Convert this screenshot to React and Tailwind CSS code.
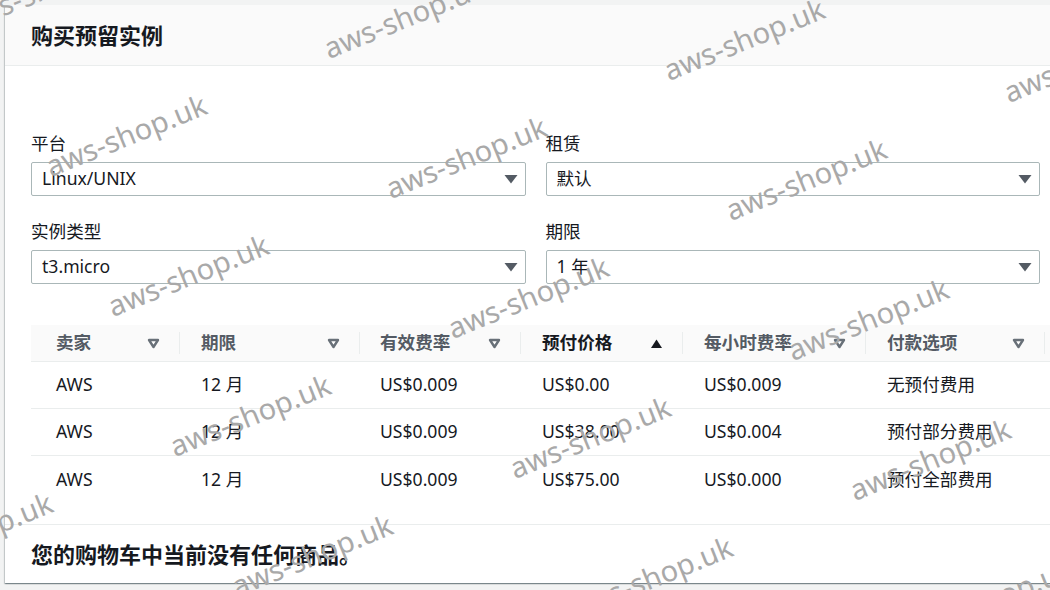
import React from "react";

const FONT = { fontFamily: '"Noto Sans", "Noto Sans CJK SC", sans-serif' };

const cols = [
  { label: "卖家", w: "w-[149px]", pl: "pl-[25px]", sort: "down" },
  { label: "期限", w: "w-[180px]", pl: "pl-[21px]", sort: "down" },
  { label: "有效费率", w: "w-[161px]", pl: "pl-[20px]", sort: "down" },
  { label: "预付价格", w: "w-[162px]", pl: "pl-[21px]", sort: "up" },
  { label: "每小时费率", w: "w-[183px]", pl: "pl-[21px]", sort: "down" },
  { label: "付款选项", w: "w-[179px]", pl: "pl-[21px]", sort: "down" },
];

const rows = [
  ["AWS", "12 月", "US$0.009", "US$0.00", "US$0.009", "无预付费用"],
  ["AWS", "12 月", "US$0.009", "US$38.00", "US$0.004", "预付部分费用"],
  ["AWS", "12 月", "US$0.009", "US$75.00", "US$0.000", "预付全部费用"],
];

function SortDown() {
  return (
    <svg width="13" height="11" viewBox="0 0 13 11" className="shrink-0">
      <polygon points="2,2 11,2 6.5,9" fill="#ffffff" stroke="#687078" strokeWidth="2.4" strokeLinejoin="round" />
    </svg>
  );
}

function SortUp() {
  return (
    <svg width="13" height="11" viewBox="0 0 13 11" className="shrink-0">
      <polygon points="1,10 12,10 6.5,1.5" fill="#16191f" />
    </svg>
  );
}

function Caret() {
  return (
    <svg width="14" height="10" viewBox="0 0 14 10" className="shrink-0">
      <polygon points="0.5,1 13.5,1 7,9.5" fill="#545b64" />
    </svg>
  );
}

function Field({ label, value }) {
  return (
    <div className="flex flex-col">
      <div className="text-[17.6px] leading-[25px] text-[#16191f]">{label}</div>
      <div className="mt-[6px] h-[34px] border border-[#aab7b8] rounded-[2px] flex items-center justify-between pl-[10px] pr-[7px] bg-white">
        <span className="text-[17.6px] text-[#16191f] leading-none">{value}</span>
        <Caret />
      </div>
    </div>
  );
}

function Watermarks() {
  const items = [];
  for (let j = 0; j <= 4; j++) {
    for (let i = -1; i <= 3; i++) {
      const x = -10 + 340 * i + 62 * j + (j === 0 && i === 0 ? -22 : 0);
      const y = 36 + 22 * i + 140 * j + (j === 0 && i === 0 ? -6 : 0);
      if (x < -200 || x > 1060 || y < -40 || y > 660) continue;
      items.push(
        <span
          key={`${i}-${j}`}
          className="absolute whitespace-nowrap text-[29px] leading-none text-[#a9a9a9] origin-bottom-left rotate-[-22deg]"
          style={{ left: x, top: y - 25, fontFamily: '"Noto Sans", sans-serif' }}
        >
          aws-shop.uk
        </span>
      );
    }
  }
  return <div className="pointer-events-none absolute inset-0 z-10">{items}</div>;
}

export default function App() {
  return (
    <div className="relative w-[1050px] h-[590px] overflow-hidden bg-[#f2f3f3] pt-[5px] pl-[5px]" style={FONT}>
      <div className="w-[1070px] bg-white shadow-[0_1px_1px_0_rgba(0,28,36,0.3),1px_1px_1px_0_rgba(0,28,36,0.15),-1px_1px_1px_0_rgba(0,28,36,0.15)]">
        <div className="h-[61px] bg-[#fafafa] border-b border-[#eaeded] px-[26px] flex items-center">
          <h2 className="text-[22px] font-bold text-[#16191f] leading-none">购买预留实例</h2>
        </div>

        <div className="pl-[26px] pt-[65px] pb-[21px]">
          <div className="w-[1009px] grid grid-cols-2 gap-x-[20px] gap-y-[23px]">
            <Field label="平台" value="Linux/UNIX" />
            <Field label="租赁" value="默认" />
            <Field label="实例类型" value="t3.micro" />
            <Field label="期限" value="1 年" />
          </div>

          <div className="mt-[41px] w-[1040px]">
            <div className="flex h-[37px] bg-[#fafafa] border-b border-[#eaeded]">
              {cols.map((c) => (
                <div key={c.label} className={`${c.w} ${c.pl} flex items-center shrink-0`}>
                  <div className="flex-1 flex items-center justify-between pr-[19px]">
                    <span
                      className={`text-[17.6px] font-bold leading-none whitespace-nowrap ${
                        c.sort === "up" ? "text-[#16191f]" : "text-[#545b64]"
                      }`}
                    >
                      {c.label}
                    </span>
                    {c.sort === "up" ? <SortUp /> : <SortDown />}
                  </div>
                  <span className="w-px h-[22px] bg-[#eaeded] shrink-0" />
                </div>
              ))}
            </div>
            {rows.map((r, ri) => (
              <div
                key={ri}
                className={`flex h-[47px] ${ri < rows.length - 1 ? "border-b border-[#eaeded]" : ""}`}
              >
                {r.map((cell, ci) => (
                  <div
                    key={ci}
                    className={`${cols[ci].w} ${cols[ci].pl} shrink-0 flex items-center text-[17.6px] text-[#16191f] leading-none whitespace-nowrap`}
                  >
                    {cell}
                  </div>
                ))}
              </div>
            ))}
          </div>
        </div>

        <div className="h-[59px] border-t border-[#eaeded] px-[26px] flex items-center">
          <h2 className="text-[22px] font-bold text-[#16191f] leading-none">您的购物车中当前没有任何商品。</h2>
        </div>
      </div>
      <Watermarks />
    </div>
  );
}
